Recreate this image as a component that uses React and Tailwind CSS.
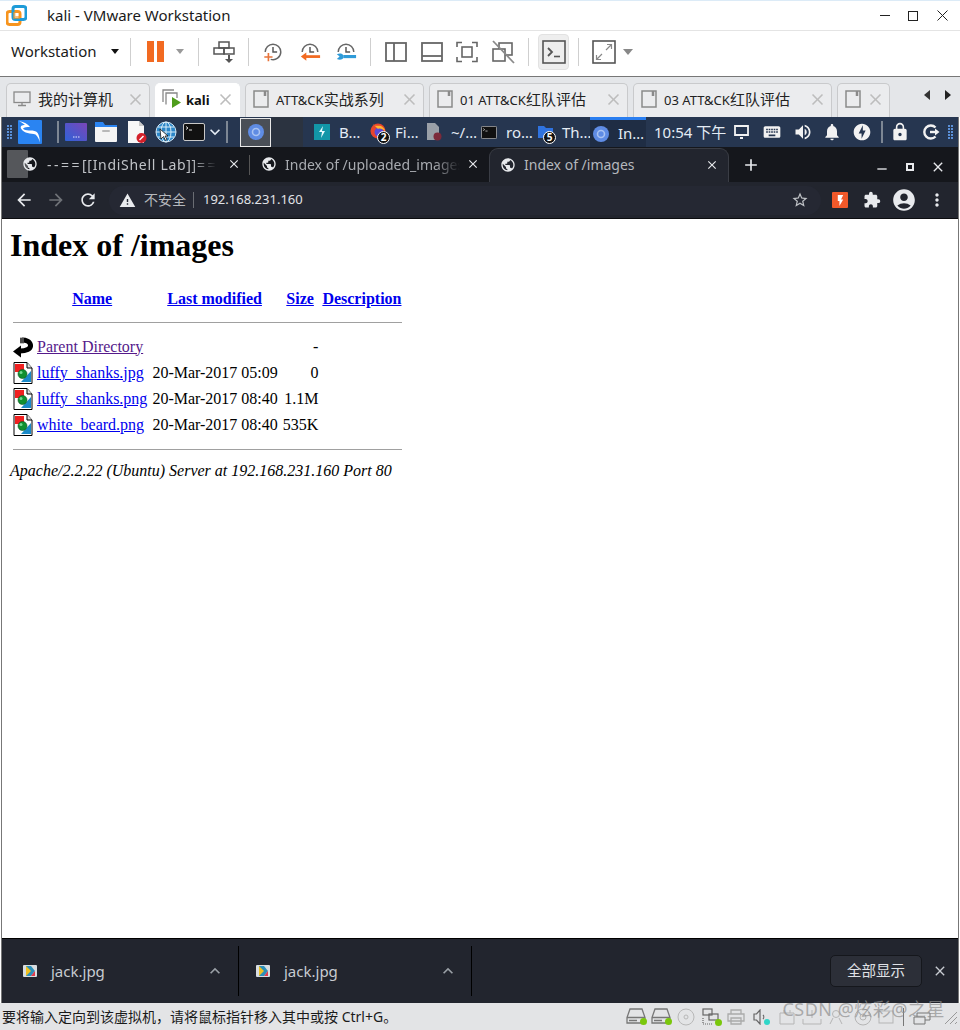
import React from 'react';
import {
  MdPublic, MdClose, MdAdd, MdArrowBack, MdArrowForward, MdRefresh, MdWarning, MdStarBorder,
  MdExtension, MdAccountCircle, MdMoreVert, MdExpandLess, MdExpandMore, MdNotifications, MdLock,
  MdKeyboard, MdVolumeUp, MdOfflineBolt, MdFlashOn, MdRemove,
} from 'react-icons/md';

const uiFont = "font-['Noto_Sans','Noto_Sans_CJK_SC',sans-serif]";

// ---------------------------------------------------------
// VMWARE TOOLBAR ICONS
// ---------------------------------------------------------
const VmwareLogo = () => (
  <svg width="21" height="21" viewBox="0 0 21 21" fill="none">
    <rect x="1" y="6.5" width="13" height="13" rx="2.5" stroke="#f7941d" strokeWidth="3" />
    <rect x="7" y="1.5" width="13" height="13" rx="2.5" stroke="#1d9bd8" strokeWidth="3" />
    <rect x="7" y="7" width="7" height="7" fill="#f7941d" opacity="0.6" />
    <rect x="9.5" y="8" width="3" height="3" fill="#fff" />
  </svg>
);

const Clock = () => (
  <>
    <path d="M3.5 12a8.5 8.5 0 1 1 17 0" stroke="#666" strokeWidth="1.6" fill="none" />
    <path d="M12 6.5V12h4.5" stroke="#555" strokeWidth="1.6" fill="none" />
  </>
);

const SnapTake = () => (
  <svg width="22" height="22" viewBox="0 0 24 24" fill="none">
    <Clock />
    <path d="M20.5 12a8.5 8.5 0 0 1-11 8" stroke="#666" strokeWidth="1.6" />
    <path d="M7 13v9M2.5 17.5h9" stroke="#e8743b" strokeWidth="1.8" />
  </svg>
);

const SnapRevert = () => (
  <svg width="22" height="22" viewBox="0 0 24 24" fill="none">
    <Clock />
    <path d="M23 17H7" stroke="#f26a21" strokeWidth="3" />
    <path d="M8 12.5 2 17l6 4.5z" fill="#f26a21" />
  </svg>
);

const SnapManage = () => (
  <svg width="22" height="22" viewBox="0 0 24 24" fill="none">
    <Clock />
    <path d="M9 17h14" stroke="#2f9bd8" strokeWidth="3.4" />
    <path d="M2 14.5c3-1.5 6-1 7 1v3c-1 2-4 2.500-7 1l3-2.500z" fill="#2f9bd8" />
  </svg>
);

const SendKeys = () => (
  <svg width="22" height="24" viewBox="0 0 22 24" fill="none" stroke="#555" strokeWidth="1.5">
    <rect x="6" y="2" width="10" height="6" />
    <rect x="1" y="8" width="10" height="6" />
    <rect x="11" y="8" width="10" height="6" />
    <path d="M16 15v5" strokeWidth="2" />
    <path d="M12 19h8l-4 4z" fill="#555" stroke="none" />
  </svg>
);

const LayoutSide = () => (
  <svg width="22" height="22" viewBox="0 0 22 22" fill="none" stroke="#666" strokeWidth="1.8">
    <rect x="1" y="2" width="20" height="18" />
    <path d="M9 2v18" />
  </svg>
);

const LayoutBottom = () => (
  <svg width="22" height="22" viewBox="0 0 22 22" fill="none" stroke="#666" strokeWidth="1.8">
    <rect x="1" y="2" width="20" height="18" />
    <path d="M1 15h20" />
  </svg>
);

const LayoutFull = () => (
  <svg width="22" height="22" viewBox="0 0 22 22" fill="none" stroke="#666" strokeWidth="1.6">
    <path d="M1 6V1.500h5M16 1.500h5V6M21 16v4.500h-5M6 20.500H1V16" />
    <rect x="6" y="6" width="10" height="10" />
  </svg>
);

const LayoutOff = () => (
  <svg width="24" height="24" viewBox="0 0 24 24" fill="none" stroke="#666" strokeWidth="1.6">
    <rect x="8" y="3" width="13" height="12" />
    <rect x="2" y="9" width="12" height="12" fill="#fff" />
    <path d="M2 1l21 22" stroke="#8a8a8a" strokeWidth="1.8" />
  </svg>
);

const ConsoleIcon = () => (
  <svg width="24" height="24" viewBox="0 0 24 24" fill="none">
    <rect x="1" y="1" width="22" height="22" stroke="#555" strokeWidth="1.6" />
    <path d="M6 8l4 4-4 4" stroke="#555" strokeWidth="1.8" />
    <path d="M12 16.500h6" stroke="#555" strokeWidth="1.6" />
  </svg>
);

const FullscreenIcon = () => (
  <svg width="24" height="24" viewBox="0 0 24 24" fill="none">
    <rect x="1" y="1" width="22" height="22" stroke="#555" strokeWidth="1.6" />
    <path d="M14 10l5-5M15 4.500h4.500V9M10 14l-5 5M4.500 15v4.500H9" stroke="#888" strokeWidth="1.2" />
  </svg>
);

const TbSep = ({ ml }) => <div className={`w-px h-7 bg-[#cfcfcf] shrink-0 ${ml}`} />;

// ---------------------------------------------------------
// VM TABS
// ---------------------------------------------------------
const PageIcon = () => (
  <svg width="16" height="18" viewBox="0 0 16 18" fill="none" stroke="#8a8a8a" strokeWidth="1.500">
    <path d="M1 1h14v16H1z" />
    <path d="M12 1v5" strokeWidth="2.500" />
  </svg>
);

const MonitorIcon = () => (
  <svg width="18" height="16" viewBox="0 0 18 16" fill="none" stroke="#8a8a8a" strokeWidth="1.300">
    <rect x="1" y="1" width="16" height="10.500" />
    <path d="M9 12v2.500M5 14.500h8" />
  </svg>
);

const KaliTabIcon = () => (
  <svg width="20" height="20" viewBox="0 0 20 20" fill="none">
    <path d="M1 13V1h11M4 15.500V4h11v5" stroke="#888" strokeWidth="1.300" />
    <path d="M10 8v11l9-5.500z" fill="#4f9d1d" />
  </svg>
);

const Latin = ({ children }) => <span className="text-[13px]">{children}</span>;

const VmTab = ({ w, icon, label, active, iconGap, labelGap }) => (
  <div className={`h-[34px] shrink-0 flex items-center pb-[3px] rounded-t-[5px] border border-b-0 ${w} ${active ? 'bg-white border-white' : 'bg-[#ebecee] border-[#c9cacc]'}`}>
    <div className={`shrink-0 ${iconGap}`}>{icon}</div>
    {label && <span className={`${labelGap} text-[15px] whitespace-nowrap ${active ? 'font-bold text-[#111]' : 'text-[#222]'}`}>{label}</span>}
    <MdClose className="ml-auto mr-[4px] shrink-0 text-[#bdbdbd]" size={19} />
  </div>
);

// ---------------------------------------------------------
// KALI PANEL
// ---------------------------------------------------------
const Grip = ({ ml }) => (
  <div className={`grid grid-cols-2 gap-[1px] w-[5px] shrink-0 ${ml}`}>
    {Array.from({ length: 10 }).map((_, i) => <div key={i} className="w-[2px] h-[2px] bg-[#5a90d8]" />)}
  </div>
);

const KaliLogo = () => (
  <svg width="24" height="24" viewBox="0 0 24 24" className="shrink-0 ml-[6px]">
    <rect width="24" height="24" rx="1" fill="#2a84f2" />
    <path d="M1 1c5 1 9 3 11 6-3 0-6 0-7 1.500 2 3 9 1 13 3 3 2 3.500 6 4 11-1-3-2-6-4.500-8C13 13 6 14 3 8.500 2 6 4 5 7 5 5 3.500 3 2 1 1z" fill="#fff" />
  </svg>
);

const PurpleIcon = () => (
  <svg width="22" height="18" viewBox="0 0 22 18" className="shrink-0 ml-[6px]">
    <defs>
      <linearGradient id="pg" x1="0" y1="1" x2="1" y2="0">
        <stop offset="0" stopColor="#2f62d8" />
        <stop offset="1" stopColor="#7a46b8" />
      </linearGradient>
    </defs>
    <rect width="22" height="18" rx="1" fill="url(#pg)" />
    <path d="M8 14h1.500M10.500 14H12M13 14h1.500" stroke="#dfe6ff" strokeWidth="1" />
  </svg>
);

const FolderIcon = () => (
  <svg width="22" height="20" viewBox="0 0 22 20" className="shrink-0 ml-[8px]">
    <path d="M0 0h8l2 3h12v4H0z" fill="#2a84f2" />
    <path d="M0 5h22v14a1 1 0 0 1-1 1H1a1 1 0 0 1-1-1z" fill="#f4f4f4" />
    <rect x="7" y="8" width="8" height="2" rx="1" fill="#b8b8b8" />
  </svg>
);

const FileRedIcon = () => (
  <svg width="20" height="22" viewBox="0 0 20 22" className="shrink-0 ml-[10px]">
    <path d="M1 0h11l5 5v17H1z" fill="#f7f7f7" />
    <path d="M12 0l5 5h-5z" fill="#c8c8c8" />
    <circle cx="14.500" cy="17" r="5" fill="#d3202a" />
    <path d="M12.500 19l4-4" stroke="#fff" strokeWidth="1.500" />
  </svg>
);

const GlobeIcon = () => (
  <svg width="22" height="22" viewBox="0 0 22 22" fill="none" className="shrink-0 ml-[8px]">
    <circle cx="11" cy="11" r="10" fill="#2b86c8" stroke="#cfe6f5" />
    <path d="M1 11h20M11 1v20M3 6h16M3 16h16" stroke="#d8edf9" strokeWidth="1" />
    <ellipse cx="11" cy="11" rx="5" ry="10" stroke="#d8edf9" />
    <path d="M5 8l1 10 2.500-2.500 2 4 1.500-1-2-3.500H13z" fill="#fff" stroke="#111" strokeWidth="0.800" />
  </svg>
);

const TermIcon = ({ w = 22, h = 18, ml }) => (
  <svg width={w} height={h} viewBox="0 0 22 18" fill="none" className={`shrink-0 ${ml}`}>
    <rect x="0.500" y="0.500" width="21" height="17" rx="1.500" fill="#111" stroke="#c8c8c8" />
    <path d="M3 3.500l2 1.500-2 1.500M6 7h3" stroke="#ddd" strokeWidth="1" />
  </svg>
);

const ChromiumIcon = ({ ml }) => (
  <svg width="16" height="16" viewBox="0 0 16 16" fill="none" className={`shrink-0 ${ml}`}>
    <circle cx="8" cy="8" r="8" fill="#5f8ce4" />
    <circle cx="8" cy="8" r="3.500" fill="#5f8ce4" stroke="#a9c3f2" strokeWidth="1.600" />
  </svg>
);

const TealIcon = () => (
  <svg width="16" height="16" viewBox="0 0 16 16" className="shrink-0 ml-[11px]">
    <rect width="16" height="16" fill="#1296a8" />
    <path d="M9 2 5 8h3l-1 6 4-7H8z" fill="#e8fbff" />
  </svg>
);

const NumBadge = ({ n }) => (
  <div className="absolute -right-[2px] -bottom-[3px] w-[13px] h-[13px] rounded-full bg-[#111] border border-white text-white text-[10px] leading-[11px] text-center font-bold">{n}</div>
);

const FirefoxBadge = () => (
  <div className="relative shrink-0 ml-[11px] w-[18px] h-[18px]">
    <svg width="16" height="16" viewBox="0 0 16 16">
      <circle cx="8" cy="8" r="7.500" fill="#e8452c" />
      <circle cx="9" cy="9" r="4.500" fill="#5b4ad8" />
      <path d="M3 1c1 3 5 1 8 2 2 1 4 3 4 5-2-2-5-3-7-2z" fill="#ffb52c" />
    </svg>
    <NumBadge n="2" />
  </div>
);

const DocGrey = () => (
  <svg width="15" height="18" viewBox="0 0 15 18" className="shrink-0 ml-[11px]">
    <path d="M0 0h8l4 4v13H0z" fill="#9aa0a8" />
    <circle cx="10.500" cy="13.500" r="4" fill="#7c2a3a" />
  </svg>
);

const FolderBadge = () => (
  <div className="relative shrink-0 ml-[8px] w-[16px] h-[18px] flex items-center">
    <svg width="15" height="12" viewBox="0 0 15 12">
      <path d="M0 0h6l2 2h7v10H0z" fill="#2f73e0" />
    </svg>
    <NumBadge n="5" />
  </div>
);

const PanelText = ({ children, w, ml }) => (
  <span className={`text-[15px] text-[#e4ecf5] whitespace-nowrap shrink-0 ${w} ${ml}`}>{children}</span>
);

const PanelSep = ({ ml }) => <div className={`w-[2px] h-[22px] bg-[#7d8794] shrink-0 ${ml}`} />;

const LogoutIcon = () => (
  <svg width="18" height="18" viewBox="0 0 18 18" fill="none" className="ml-[12px] shrink-0">
    <path d="M13.500 4.500a6.500 6.500 0 1 0 0 9" stroke="#f2f2f2" strokeWidth="2.400" />
    <path d="M8 9h6" stroke="#f2f2f2" strokeWidth="2.400" />
    <path d="M13 5.500 17.500 9 13 12.500z" fill="#f2f2f2" />
  </svg>
);

// ---------------------------------------------------------
// APACHE ICONS
// ---------------------------------------------------------
const ApacheBack = () => (
  <svg width="20" height="22" viewBox="0 0 20 22" className="block">
    <path d="M7 15c6 0 11-2 10.500-6C17 5.500 13 4 9 4" stroke="#000" strokeWidth="5" fill="none" />
    <path d="M0 15.500 8 9.500v12z" fill="#000" />
    <path d="M7 2h4v5H7z" fill="#111" />
    <path d="M8 1v7M10 1v7" stroke="#888" strokeWidth="1" />
  </svg>
);

const ApacheImage = () => (
  <svg width="20" height="22" viewBox="0 0 20 22" className="block">
    <path d="M1 .5h13L19 6v15.500H1z" fill="#fff" stroke="#000" />
    <path d="M14 .5V6h5" fill="#ddd" stroke="#000" />
    <rect x="2" y="2" width="9" height="8" fill="#f02020" />
    <path d="M18 9v11H8z" fill="#1a8ac8" />
    <circle cx="9.500" cy="12" r="4.500" fill="#109030" stroke="#0a5020" strokeWidth="0.600" />
    <circle cx="8" cy="10.500" r="1.500" fill="#70d890" />
  </svg>
);

const files = [
  { name: 'luffy_shanks.jpg', date: '20-Mar-2017 05:09', size: '0' },
  { name: 'luffy_shanks.png', date: '20-Mar-2017 08:40', size: '1.1M' },
  { name: 'white_beard.png', date: '20-Mar-2017 08:40', size: '535K' },
];

const Rule = ({ mt }) => (
  <tr>
    <td colSpan={5} className="p-px">
      <div className={`h-[2px] border-t border-[#a0a0a0] mb-[8px] ${mt}`} />
    </td>
  </tr>
);

const linkCls = 'text-[#0000ee] underline';

const IndexPage = () => (
  <div className="flex-1 bg-white pl-[8px] text-black font-['Liberation_Serif',serif] text-[16px] leading-[normal]">
    <h1 className="text-[32px] font-bold leading-[37px] mt-[8px] mb-[22.500px]">Index of /images</h1>
    <table className="border-separate border-spacing-[2px]">
      <tbody>
        <tr>
          <th className="p-px" />
          <th className="p-px"><span className={linkCls}>Name</span></th>
          <th className="p-px"><span className={linkCls}>Last modified</span></th>
          <th className="p-px"><span className={linkCls}>Size</span></th>
          <th className="p-px pr-[2px]"><span className={linkCls}>Description</span></th>
        </tr>
        <Rule mt="mt-[10px]" />
        <tr>
          <td className="p-px"><ApacheBack /></td>
          <td className="p-px"><span className="text-[#551a8b] underline">Parent Directory</span></td>
          <td className="p-px" />
          <td className="p-px text-right">-</td>
          <td className="p-px" />
        </tr>
        {files.map((f) => (
          <tr key={f.name}>
            <td className="p-px"><ApacheImage /></td>
            <td className="p-px"><span className={linkCls}>{f.name}</span></td>
            <td className="p-px text-right pl-[2px]">{f.date}</td>
            <td className="p-px text-right pl-[2px]">{f.size}</td>
            <td className="p-px" />
          </tr>
        ))}
        <Rule mt="mt-[9px]" />
      </tbody>
    </table>
    <address className="italic">Apache/2.2.22 (Ubuntu) Server at 192.168.231.160 Port 80</address>
  </div>
);

// ---------------------------------------------------------
// DOWNLOAD SHELF / STATUS BAR
// ---------------------------------------------------------
const DownloadFileIcon = ({ ml }) => (
  <svg width="14" height="12" viewBox="0 0 14 12" className={`shrink-0 ${ml}`}>
    <rect width="14" height="12" rx="1" fill="#d8dde0" />
    <path d="M3 1h5l4 5-4 5H3z" fill="#2c8fb8" />
    <path d="M3 1l5 5-5 5z" fill="#f0c020" />
    <path d="M8 11l4-5v5z" fill="#e03a4a" />
  </svg>
);

const DownloadItem = ({ w, pl }) => (
  <div className={`h-[50px] flex items-center border-r border-black shrink-0 ${w}`}>
    <DownloadFileIcon ml={pl} />
    <span className="ml-[14px] text-[15px] text-[#c8ccd2]">jack.jpg</span>
    <MdExpandLess className="ml-auto mr-[13px] text-[#9aa0a6]" size={20} />
  </div>
);

const DiskIcon = ({ ml }) => (
  <div className={`relative w-[21px] h-[17px] shrink-0 ${ml}`}>
    <svg width="20" height="16" viewBox="0 0 20 16" fill="none" stroke="#777" strokeWidth="1.300">
      <path d="M1 15V9.500L4 1h12l3 8.500V15zM1 9.500h18M3 12.500h8" />
    </svg>
    <div className="absolute right-0 bottom-0 w-[7px] h-[7px] rounded-full bg-[#7ac70c]" />
  </div>
);

const StatusIcons = () => (
  <div className="ml-auto flex items-center mr-[2px]">
    <DiskIcon />
    <DiskIcon ml="ml-[4px]" />
    <svg width="18" height="18" viewBox="0 0 18 18" fill="none" stroke="#b8b8b8" className="ml-[5px] shrink-0">
      <circle cx="9" cy="9" r="8" />
      <circle cx="9" cy="9" r="2" />
    </svg>
    <div className="relative w-[20px] h-[18px] ml-[7px] shrink-0">
      <svg width="18" height="18" viewBox="0 0 18 18" fill="none" stroke="#666" strokeWidth="1.200">
        <rect x="1" y="1" width="9" height="6" />
        <rect x="7" y="6" width="9" height="6" />
        <path d="M1 10v6h9" strokeDasharray="1 1" />
      </svg>
      <div className="absolute right-0 bottom-0 w-[7px] h-[7px] rounded-full bg-[#7ac70c]" />
    </div>
    <svg width="18" height="16" viewBox="0 0 18 16" fill="none" stroke="#aaa" strokeWidth="1.300" className="ml-[5px] shrink-0">
      <path d="M4 5V1h10v4M1 5h16v7H1zM4 9h10v6H4z" />
    </svg>
    <div className="relative w-[17px] h-[16px] ml-[8px] shrink-0">
      <svg width="14" height="16" viewBox="0 0 14 16" fill="none" stroke="#666" strokeWidth="1.200">
        <path d="M7 1v14L3.500 11H1V5h2.500zM10 6c1 1 1 3 0 4" />
      </svg>
      <div className="absolute right-0 bottom-0 w-[6px] h-[6px] rounded-full bg-[#2fd6c8]" />
    </div>
    <svg width="16" height="16" viewBox="0 0 16 16" fill="none" stroke="#b5b5b5" className="ml-[9px] shrink-0">
      <path d="M1 4h14v11H1zM5 1v3M11 1v3" />
    </svg>
    <svg width="20" height="16" viewBox="0 0 20 16" fill="none" stroke="#b5b5b5" className="ml-[7px] shrink-0">
      <path d="M10 1v8M1 10v5h18v-5" />
    </svg>
    <svg width="16" height="16" viewBox="0 0 16 16" fill="none" stroke="#b5b5b5" className="ml-[6px] shrink-0">
      <circle cx="8" cy="5" r="3.500" />
      <path d="M2 15l3-6M14 15l-3-6" />
    </svg>
    <svg width="18" height="18" viewBox="0 0 18 18" fill="none" stroke="#b5b5b5" className="ml-[10px] shrink-0">
      <circle cx="9" cy="9" r="8" />
      <circle cx="9" cy="9" r="3" />
    </svg>
    <svg width="16" height="16" viewBox="0 0 16 16" fill="none" stroke="#b5b5b5" className="ml-[6px] shrink-0">
      <rect x="1" y="2" width="14" height="12" />
    </svg>
    <div className="w-px h-[18px] bg-[#777] ml-[9px] shrink-0" />
    <svg width="18" height="16" viewBox="0 0 18 16" fill="none" stroke="#777" className="ml-[9px] shrink-0">
      <path d="M1 8h11v7H1zM4 8V4h13v7h-5" />
    </svg>
    <svg width="16" height="16" viewBox="0 0 16 16" fill="none" stroke="#999" className="ml-[11px] shrink-0">
      <path d="M15 3 3 15M15 8l-7 7M15 13l-2 2" />
    </svg>
  </div>
);

export default function App() {
  return (
    <div className={`relative w-[960px] h-[1030px] bg-white overflow-hidden flex flex-col ${uiFont}`}>
      {/* title bar */}
      <div className="h-[30px] flex items-center shrink-0 border-t border-[#dcebf7]">
        <div className="ml-[6px]"><VmwareLogo /></div>
        <span className="ml-[20px] text-[15px] text-[#1a1a1a]">kali - VMware Workstation</span>
        <div className="ml-auto flex items-center mr-[10px]">
          <div className="w-[10px] h-px bg-[#222]" />
          <div className="ml-[18px] w-[10px] h-[10px] border border-[#222]" />
          <svg width="15" height="11" viewBox="0 0 15 11" stroke="#222" fill="none" className="ml-[17px]"><path d="M2.500 .5l10 10M12.500 .5l-10 10" /></svg>
        </div>
      </div>

      {/* toolbar */}
      <div className="h-[46px] shrink-0 flex items-center border-t border-[#e4e4e4] pl-[11px] pb-[4px]">
        <span className="text-[15px] text-[#1a1a1a] w-[89px]">Workstation</span>
        <div className="ml-[11px] shrink-0 w-0 h-0 border-x-[4px] border-x-transparent border-t-[5px] border-t-[#111]" />
        <TbSep ml="ml-[11px]" />
        <div className="flex gap-[3px] ml-[16px] shrink-0">
          <div className="w-[7px] h-[21px] bg-[#f26a21]" />
          <div className="w-[7px] h-[21px] bg-[#f26a21]" />
        </div>
        <div className="ml-[12px] shrink-0 w-0 h-0 border-x-[4px] border-x-transparent border-t-[5px] border-t-[#999]" />
        <TbSep ml="ml-[14px]" />
        <div className="ml-[14px] shrink-0"><SendKeys /></div>
        <TbSep ml="ml-[13px]" />
        <div className="ml-[13px] shrink-0"><SnapTake /></div>
        <div className="ml-[15px] shrink-0"><SnapRevert /></div>
        <div className="ml-[14px] shrink-0"><SnapManage /></div>
        <TbSep ml="ml-[13px]" />
        <div className="ml-[14px] shrink-0"><LayoutSide /></div>
        <div className="ml-[14px] shrink-0"><LayoutBottom /></div>
        <div className="ml-[13px] shrink-0"><LayoutFull /></div>
        <div className="ml-[13px] shrink-0"><LayoutOff /></div>
        <TbSep ml="ml-[13px]" />
        <div className="ml-[9px] w-[31px] h-[36px] rounded-[4px] bg-[#eeeeee] border border-[#e2e2e2] flex items-center justify-center shrink-0"><ConsoleIcon /></div>
        <TbSep ml="ml-[9px]" />
        <div className="ml-[13px] shrink-0"><FullscreenIcon /></div>
        <div className="ml-[7px] shrink-0 w-0 h-0 border-x-[5px] border-x-transparent border-t-[6px] border-t-[#888]" />
      </div>

      {/* vm tabs */}
      <div className="h-[41px] shrink-0 bg-[#e4e6e9] border-t border-[#777] flex items-end pl-[6px] gap-[5px]">
        <VmTab w="w-[144px]" icon={<MonitorIcon />} label="我的计算机" iconGap="ml-[6px]" labelGap="ml-[7px]" />
        <VmTab w="w-[85px]" active icon={<KaliTabIcon />} label={<Latin>kali</Latin>} iconGap="ml-[6px]" labelGap="ml-[4px]" />
        <VmTab w="w-[179px]" icon={<PageIcon />} label={<><Latin>ATT&amp;CK</Latin>实战系列</>} iconGap="ml-[7px]" labelGap="ml-[7px]" />
        <VmTab w="w-[199px]" icon={<PageIcon />} label={<><Latin>01 ATT&amp;CK</Latin>红队评估</>} iconGap="ml-[7px]" labelGap="ml-[7px]" />
        <VmTab w="w-[199px]" icon={<PageIcon />} label={<><Latin>03 ATT&amp;CK</Latin>红队评估</>} iconGap="ml-[7px]" labelGap="ml-[7px]" />
        <VmTab w="w-[53px]" icon={<PageIcon />} iconGap="ml-[7px]" />
        <div className="self-center ml-[29px] flex items-center gap-[15px] mt-[-4px]">
          <div className="w-0 h-0 border-y-[5px] border-y-transparent border-r-[6px] border-r-[#333]" />
          <div className="w-0 h-0 border-y-[5px] border-y-transparent border-l-[6px] border-l-[#222]" />
        </div>
      </div>

      {/* guest screen */}
      <div className="flex-1 min-h-0 flex flex-col ml-px mr-px border-x border-[#777]">
        {/* kali panel */}
        <div className="h-[30px] shrink-0 bg-[#263650] flex items-center">
          <Grip ml="ml-[5px]" />
          <KaliLogo />
          <PanelSep ml="ml-[15px]" />
          <PurpleIcon />
          <FolderIcon />
          <FileRedIcon />
          <GlobeIcon />
          <TermIcon ml="ml-[6px]" />
          <MdExpandMore className="shrink-0 text-[#e4ecf5]" size={20} />
          <PanelSep ml="ml-[1px]" />
          <div className="ml-[12px] h-[29px] w-[31px] border border-[#e8e8e8] bg-[#4a4f57] flex items-center justify-center shrink-0">
            <ChromiumIcon />
          </div>
          <div className="h-[30px] w-[32px] bg-[#2b3340] shrink-0" />
          <TealIcon />
          <PanelText w="w-[20px]" ml="ml-[9px]">B…</PanelText>
          <FirefoxBadge />
          <PanelText w="w-[21px]" ml="ml-[7px]">Fi…</PanelText>
          <DocGrey />
          <PanelText w="w-[25px]" ml="ml-[9px]">~/…</PanelText>
          <TermIcon w={16} h={13} ml="ml-[5px]" />
          <PanelText w="w-[24px]" ml="ml-[9px]">ro…</PanelText>
          <FolderBadge />
          <PanelText w="w-[26px]" ml="ml-[8px]">Th…</PanelText>
          <div className="ml-[2px] w-[56px] h-[30px] bg-[#1f2d44] border-t-[3px] border-[#2a7ef0] flex items-center shrink-0">
            <ChromiumIcon ml="ml-[3px]" />
            <PanelText w="w-[22px]" ml="ml-[9px]">In…</PanelText>
          </div>
          <span className="ml-[8px] w-[70px] text-[15px] text-[#e4ecf5] whitespace-nowrap shrink-0">10:54 下午</span>
          <svg width="15" height="14" viewBox="0 0 15 14" fill="none" stroke="#f2f2f2" strokeWidth="1.800" className="ml-[10px] shrink-0">
            <path d="M1 1h13v9H1zM6 13h3" />
          </svg>
          <MdKeyboard className="ml-[13px] shrink-0 text-[#f2f2f2]" size={20} />
          <MdVolumeUp className="ml-[11px] shrink-0 text-[#f2f2f2]" size={20} />
          <MdNotifications className="ml-[9px] shrink-0 text-[#f2f2f2]" size={20} />
          <MdOfflineBolt className="ml-[10px] shrink-0 text-[#f2f2f2]" size={20} />
          <PanelSep ml="ml-[9px]" />
          <MdLock className="ml-[7px] shrink-0 text-[#f2f2f2]" size={20} />
          <LogoutIcon />
          <Grip ml="ml-[8px]" />
        </div>

        {/* chrome tabs */}
        <div className="h-[35px] shrink-0 bg-[#15171c] flex items-end text-[14px]">
          <div className="h-[34px] w-[247px] flex items-center shrink-0 relative pb-[2px]">
            <div className="absolute left-[5px] top-[2px] w-[21px] h-[28px] bg-[#55575b] rounded-[1px]" />
            <MdPublic className="relative ml-[20px] shrink-0 text-[#e8eaed]" size={16} />
            <span className="relative ml-[9px] text-[#c0c3c7] whitespace-nowrap w-[170px] overflow-hidden [mask-image:linear-gradient(to_right,black_85%,transparent)]"><span className="tracking-[2.500px]">--==</span><span className="tracking-[0.700px]">[[IndiShell Lab]]</span><span className="tracking-[2.500px]">==-</span></span>
            <MdClose className="ml-[10px] shrink-0 text-[#e8eaed]" size={14} />
          </div>
          <div className="w-px h-[20px] bg-[#555] shrink-0 mb-[7px]" />
          <div className="h-[34px] w-[239px] flex items-center shrink-0 pb-[2px]">
            <MdPublic className="ml-[11px] shrink-0 text-[#e8eaed]" size={16} />
            <span className="ml-[8px] text-[#a8abb0] whitespace-nowrap w-[175px] overflow-hidden [mask-image:linear-gradient(to_right,black_85%,transparent)]">Index of /uploaded_images</span>
            <MdClose className="ml-[6px] shrink-0 text-[#e8eaed]" size={14} />
          </div>
          <div className="h-[34px] w-[240px] flex items-center shrink-0 pb-[2px] bg-[#22252e] rounded-t-[9px] border border-b-0 border-[#3a3d45]">
            <MdPublic className="ml-[10px] shrink-0 text-[#e8eaed]" size={16} />
            <span className="ml-[8px] text-[#b5b8bd] whitespace-nowrap">Index of /images</span>
            <MdClose className="ml-auto mr-[9px] shrink-0 text-[#e8eaed]" size={14} />
          </div>
          <MdAdd className="ml-[12px] mb-[7px] shrink-0 text-[#e8eaed]" size={20} />
          <MdRemove className="ml-auto mb-[5px] shrink-0 text-[#e8eaed]" size={16} />
          <div className="ml-[16px] mb-[11px] w-[8px] h-[8px] border-2 border-[#e8eaed] shrink-0" />
          <MdClose className="ml-[16px] mr-[12px] mb-[7px] shrink-0 text-[#e8eaed]" size={16} />
        </div>

        {/* address bar */}
        <div className="h-[37px] shrink-0 bg-[#22252e] flex items-center border-b border-[#0c0d10]">
          <MdArrowBack className="ml-[12px] shrink-0 text-[#e8eaed]" size={20} />
          <MdArrowForward className="ml-[12px] shrink-0 text-[#6f7277]" size={20} />
          <MdRefresh className="ml-[12px] shrink-0 text-[#e8eaed]" size={20} />
          <div className="ml-[11px] w-[712px] h-[29px] rounded-full bg-[#252833] flex items-center shrink-0">
            <MdWarning className="ml-[10px] shrink-0 text-[#e8eaed]" size={17} />
            <span className="ml-[8px] w-[42px] pb-[2px] text-[14px] text-[#b5b8bd] whitespace-nowrap shrink-0">不安全</span>
            <div className="w-px h-[16px] bg-[#6a6d73] ml-[7px]" />
            <span className="ml-[9px] text-[13px] text-[#e0e2e6] whitespace-nowrap">192.168.231.160</span>
            <MdStarBorder className="ml-auto mr-[12px] text-[#c0c3c7]" size={18} />
          </div>
          <div className="ml-[11px] w-[16px] h-[16px] rounded-[1px] bg-[#f2592a] flex items-center justify-center shrink-0">
            <MdFlashOn className="text-white" size={13} />
          </div>
          <MdExtension className="ml-[15px] shrink-0 text-[#e8eaed]" size={18} />
          <MdAccountCircle className="ml-[10px] shrink-0 text-[#e8eaed]" size={26} />
          <MdMoreVert className="ml-[10px] shrink-0 text-[#e8eaed]" size={20} />
        </div>

        <IndexPage />

        {/* download shelf */}
        <div className="h-[65px] shrink-0 bg-[#22252e] border-t border-black flex items-center">
          <DownloadItem w="w-[237px]" pl="ml-[21px]" />
          <DownloadItem w="w-[233px]" pl="ml-[17px]" />
          <div className="ml-auto w-[92px] h-[32px] rounded-[5px] bg-[#2c2f38] border border-[#15171c] flex items-center justify-center text-[14.500px] text-[#e0e2e6] shrink-0">全部显示</div>
          <MdClose className="ml-[10px] mr-[10px] shrink-0 text-[#c8ccd2]" size={16} />
        </div>
      </div>

      {/* status bar */}
      <div className="h-[27px] shrink-0 bg-[#e3e4e6] flex items-center pl-[2px]">
        <span className="text-[14px] text-[#1a1a1a] whitespace-nowrap">要将输入定向到该虚拟机，请将鼠标指针移入其中或按 Ctrl+G。</span>
        <StatusIcons />
      </div>

      {/* csdn watermark */}
      <span className="absolute right-[15px] bottom-[7px] text-[18px] tracking-[0.500px] text-[#8e8e8e]/70 whitespace-nowrap">CSDN @炫彩@之星</span>
    </div>
  );
}
